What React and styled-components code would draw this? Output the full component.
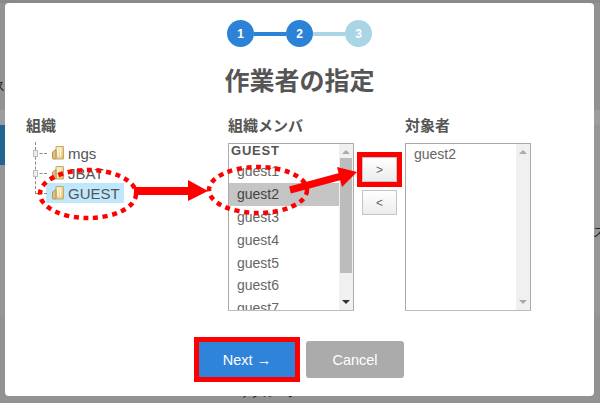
import React from "react";
import styled, { createGlobalStyle } from "styled-components";

const Global = createGlobalStyle`
  html, body { margin: 0; padding: 0; width: 600px; height: 403px; overflow: hidden; }
  * { box-sizing: border-box; }
  body { font-family: "Liberation Sans", "Noto Sans CJK JP", sans-serif; color: #555; }
`;

const Backdrop = styled.div`
  position: relative;
  width: 600px;
  height: 403px;
  padding: 3px 6px 7px 5px;
  overflow: hidden;
  background: linear-gradient(#8a8a8a 0 3px, #929292 3px 110px, #9d9d9d 110px 125px, #969696 125px 315px, #929292 315px);
`;
const BlueBand = styled.div`
  position: absolute;
  left: 0;
  top: 125px;
  width: 5px;
  height: 40px;
  background: #1f6590;
`;
const BehindText = styled.div`
  position: absolute;
  left: ${p => p.$x}px;
  top: ${p => p.$y}px;
  font-size: 12px;
  line-height: 14px;
  color: #222;
  white-space: nowrap;
`;
const Modal = styled.div`
  position: relative;
  width: 589px;
  height: 393px;
  background: #fff;
  border-radius: 4px;
  display: flex;
  flex-direction: column;
  align-items: stretch;
`;
const Steps = styled.div`
  display: flex;
  align-items: center;
  justify-content: center;
  margin-top: 17px;
`;
const Step = styled.div`
  width: 27px;
  height: 27px;
  border-radius: 50%;
  background: ${p => (p.$on ? "#2c82d6" : "#a9d5e4")};
  color: #fff;
  font-size: 12px;
  font-weight: 700;
  display: flex;
  align-items: center;
  justify-content: center;
`;
const Link = styled.div`
  width: 32px;
  height: 4px;
  background: ${p => (p.$on ? "#2c82d6" : "#a9d5e4")};
`;
const Title = styled.h1`
  margin: 16px 0 0;
  height: 36px;
  line-height: 36px;
  text-align: center;
  font-size: 25px;
  font-weight: 700;
  color: #555;
`;
const Columns = styled.div`
  display: flex;
  margin-top: 18px;
  padding-left: 21px;
  height: 194px;
`;
const Col = styled.div`
  width: ${p => p.$w}px;
  flex: none;
  display: flex;
  flex-direction: column;
`;
const Label = styled.div`
  height: 18px;
  line-height: 18px;
  font-size: 15px;
  font-weight: 700;
  color: #555;
  margin-bottom: 8px;
  white-space: nowrap;
`;
const Tree = styled.div`
  position: relative;
  padding: 0 0 0 20px;
  display: flex;
  flex-direction: column;
  &::before {
    content: "";
    position: absolute;
    left: 9px;
    top: -1px;
    height: 52px;
    border-left: 1px dashed #888;
  }
`;
const Node = styled.div`
  position: relative;
  display: flex;
  align-items: center;
  gap: 4px;
  width: ${p => (p.$sel ? "78px" : "auto")};
  height: 20px;
  font-size: 15px;
  color: #555;
  padding-left: 6px;
  background: ${p => (p.$sel ? "#bfe8fd" : "transparent")};
  &::before {
    content: "";
    position: absolute;
    left: -11px;
    top: 10px;
    width: 12px;
    border-top: 1px dashed #888;
  }
`;
const Plus = styled.span`
  position: absolute;
  left: -13px;
  top: 7px;
  width: 5px;
  height: 7px;
  background: #eee;
  border: 1px solid #bbb;
`;
const ListBox = styled.div`
  position: relative;
  width: 126px;
  height: 168px;
  border: 1px solid #aaa;
  border-bottom-color: #bbb;
  background: #fff;
  overflow: hidden;
  display: flex;
`;
const Items = styled.div`
  flex: 1;
  min-width: 0;
  overflow: hidden;
  font-size: 14px;
  color: #666;
`;
const Group = styled.div`
  height: 15px;
  line-height: 13px;
  padding-left: 2px;
  font-weight: 700;
  font-size: 13px;
  letter-spacing: 0.8px;
  color: #555;
`;
const Option = styled.div`
  height: 22.9px;
  line-height: 22.9px;
  padding-left: 8px;
  margin-top: ${p => (p.$first ? "1px" : "0")};
  background: ${p => (p.$sel ? "#c5c5c5" : "transparent")};
  color: ${p => (p.$sel ? "#444" : "#666")};
`;
const Plain = styled.div`
  padding: 0 0 0 8px;
  height: 22px;
  line-height: 21px;
`;
const Scrollbar = styled.div`
  position: relative;
  width: 14px;
  flex: none;
  background: #f0f0f0;
`;
const Thumb = styled.div`
  position: absolute;
  left: 1px;
  right: 1px;
  top: 14px;
  height: 115px;
  background: #bcbcbc;
`;
const ArrowUp = styled.span`
  position: absolute;
  left: 3px;
  top: 6px;
  border: 4px solid transparent;
  border-top: 0;
  border-bottom: 4px solid ${p => p.$c};
`;
const ArrowDown = styled.span`
  position: absolute;
  left: 3px;
  bottom: 6px;
  border: 4px solid transparent;
  border-bottom: 0;
  border-top: 4px solid ${p => p.$c};
`;
const Mover = styled.div`
  display: flex;
  flex-direction: column;
  gap: 8px;
  width: 51px;
  flex: none;
  padding: 40px 0 0 8px;
`;
const MoveButton = styled.button`
  width: 35px;
  height: 25px;
  padding: 0;
  font: 12px "Liberation Sans", sans-serif;
  color: #666;
  border: 1px solid #c4c4c4;
  border-radius: 0;
  background: linear-gradient(#fff, #ececec);
  outline: ${p => (p.$mark ? "5px solid #f00" : "none")};
`;
const Footer = styled.div`
  display: flex;
  justify-content: flex-start;
  padding-left: 194px;
  gap: 11px;
  margin-top: 30px;
  align-items: center;
`;
const Next = styled.button`
  width: 96px;
  height: 35px;
  border: 0;
  background: #2f83d8;
  color: #fff;
  font: 14.5px "Liberation Sans", sans-serif;
  outline: 5px solid #f00;
`;
const Cancel = styled.button`
  width: 98px;
  height: 37px;
  border: 0;
  border-radius: 3px;
  background: #ababab;
  color: #fff;
  font: 14.5px "Liberation Sans", sans-serif;
`;
const Marks = styled.svg`
  position: absolute;
  left: 0;
  top: 0;
  pointer-events: none;
`;

const Folder = () => (
  <svg width="12" height="14" viewBox="0 0 12 14">
    <defs>
      <linearGradient id="fold" x1="0" y1="0" x2="1" y2="1">
        <stop offset="0" stopColor="#fbf0cc" />
        <stop offset="1" stopColor="#e2c27c" />
      </linearGradient>
    </defs>
    <path d="M4 .5h7a.5.5 0 0 1 .5.5v12H4z" fill="url(#fold)" stroke="#c9a860" />
    <path d="M.5 6 4 3.5v9.5H1a.5.5 0 0 1-.5-.5z" fill="#ddc07c" stroke="#b8975a" />
    <path d="M6 2.5v8M8.5 2.5v8" stroke="#fff8e0" strokeWidth="1.2" />
  </svg>
);

export default function App() {
  return (
    <Backdrop>
      <Global />
      <BlueBand />
      <BehindText $x={215} $y={386}>ユーザグループ</BehindText>
      <BehindText $x={593} $y={226}>ス</BehindText>
      <BehindText $x={-7} $y={80}>ス</BehindText>
      <Modal>
        <Steps>
          <Step $on>1</Step>
          <Link $on />
          <Step $on>2</Step>
          <Link />
          <Step>3</Step>
        </Steps>
        <Title>作業者の指定</Title>
        <Columns>
          <Col $w={202}>
            <Label>組織</Label>
            <Tree>
              <Node><Plus /><Folder />mgs</Node>
              <Node><Plus /><Folder />JBAT</Node>
              <Node $sel><Folder />GUEST</Node>
            </Tree>
          </Col>
          <Col $w={126}>
            <Label>組織メンバ</Label>
            <ListBox>
              <Items>
                <Group>GUEST</Group>
                <Option $first>guest1</Option>
                <Option $sel>guest2</Option>
                <Option>guest3</Option>
                <Option>guest4</Option>
                <Option>guest5</Option>
                <Option>guest6</Option>
                <Option>guest7</Option>
              </Items>
              <Scrollbar>
                <ArrowUp $c="#aaa" />
                <Thumb />
                <ArrowDown $c="#333" />
              </Scrollbar>
            </ListBox>
          </Col>
          <Mover>
            <MoveButton $mark>&gt;</MoveButton>
            <MoveButton>&lt;</MoveButton>
          </Mover>
          <Col $w={126}>
            <Label>対象者</Label>
            <ListBox>
              <Items><Plain>guest2</Plain></Items>
              <Scrollbar>
                <ArrowUp $c="#aaa" />
                <ArrowDown $c="#aaa" />
              </Scrollbar>
            </ListBox>
          </Col>
        </Columns>
        <Footer>
          <Next>Next →</Next>
          <Cancel>Cancel</Cancel>
        </Footer>
      </Modal>
      <Marks width="600" height="403" viewBox="0 0 600 403">
        <ellipse cx="88" cy="194" rx="48" ry="24" fill="none" stroke="#f00" strokeWidth="4.5" strokeDasharray="5 4.6" />
        <ellipse cx="258" cy="190" rx="49" ry="23" fill="none" stroke="#f00" strokeWidth="4.5" strokeDasharray="5 4.6" />
        <path d="M134 191H190" stroke="#f00" strokeWidth="8" />
        <path d="M188 180 208 191 188 201z" fill="#f00" />
        <path d="M290 190 342 176" stroke="#f00" strokeWidth="7" />
        <path d="M337 167 357 172 342 187z" fill="#f00" />
      </Marks>
    </Backdrop>
  );
}
